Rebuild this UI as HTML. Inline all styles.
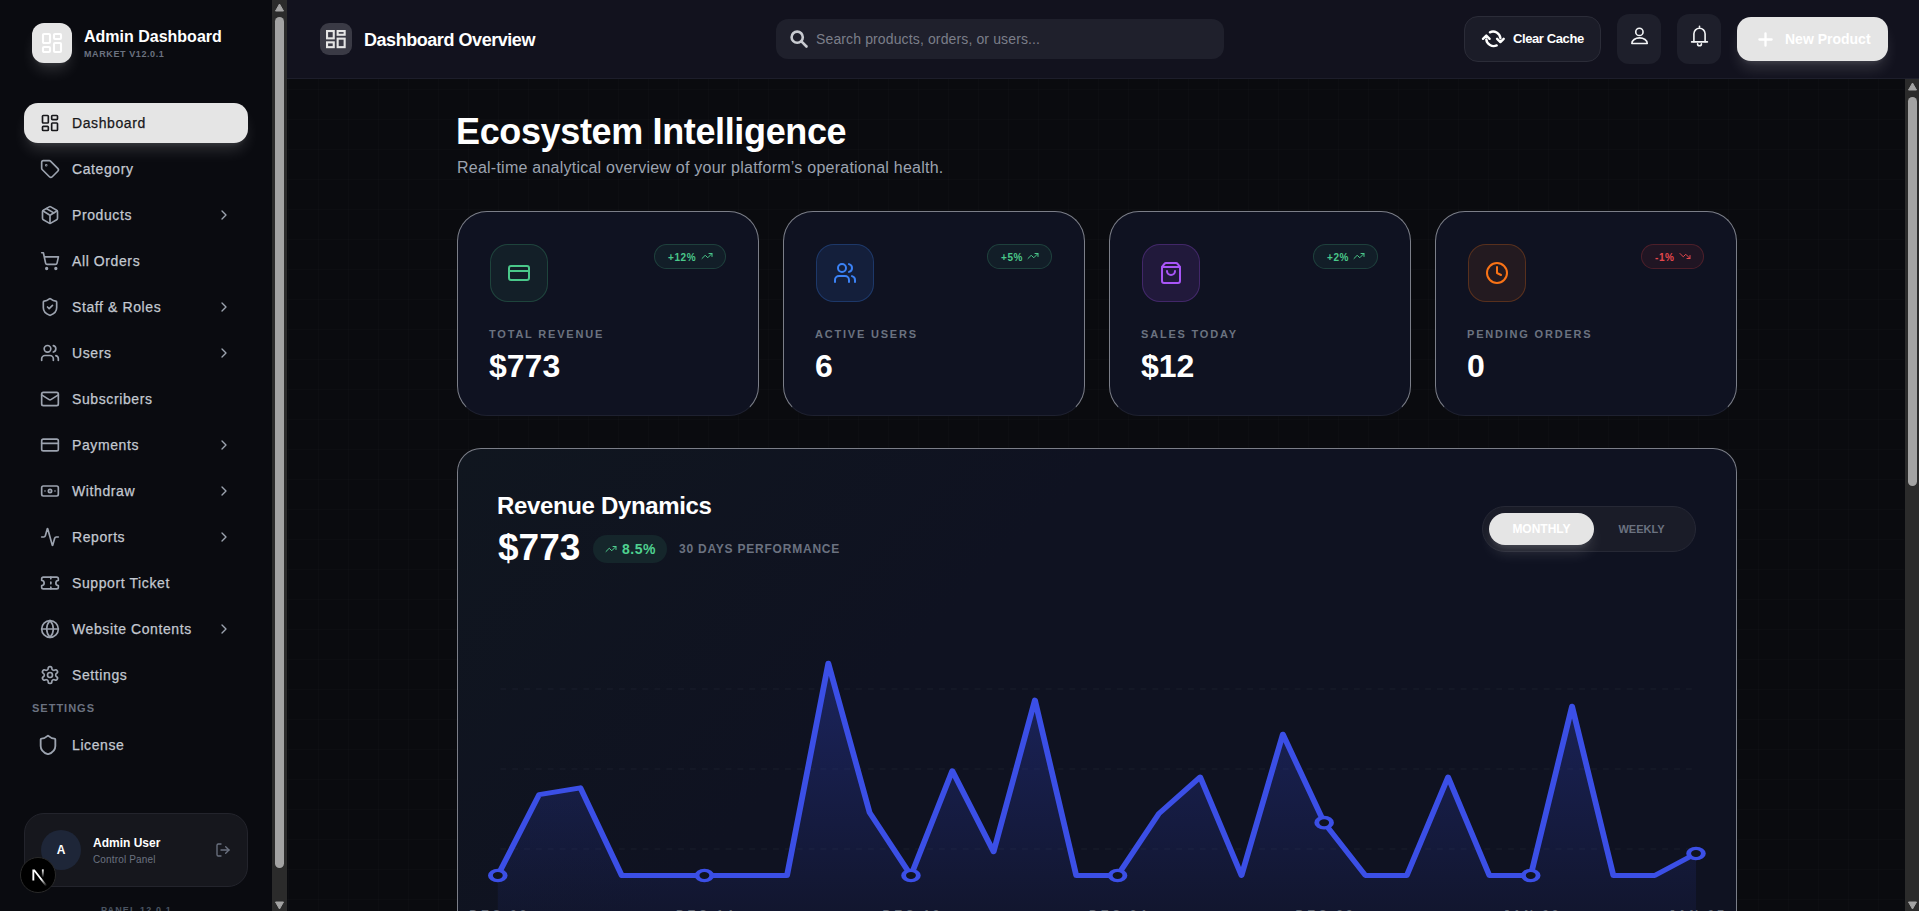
<!DOCTYPE html>
<html><head><meta charset="utf-8">
<style>
*{box-sizing:border-box;margin:0;padding:0}
html,body{width:1919px;height:911px;overflow:hidden;background:#0a0b0f;font-family:"Liberation Sans",sans-serif;}
.abs{position:absolute}
svg{display:block}
.t{position:absolute;white-space:nowrap}
</style></head><body>

<div class="abs" style="left:287px;top:79px;width:1617px;height:832px;background-color:#0a0b0f;background-image:linear-gradient(to right, rgba(255,255,255,0.013) 1px, transparent 1px),linear-gradient(to bottom, rgba(255,255,255,0.013) 1px, transparent 1px);background-size:30px 30px;background-position:31px 10px"></div>
<div class="abs" style="left:0;top:0;width:272px;height:911px;background:#0a0b10"></div>
<div class="abs" style="left:32px;top:23px;width:40px;height:40px;border-radius:12px;background:#e5e5e5;box-shadow:0 10px 15px -3px rgba(255,255,255,0.14),0 4px 6px -4px rgba(255,255,255,0.14)"><svg class="abs" style="left:8px;top:8px" width="24" height="24" viewBox="0 0 24 24" fill="none" stroke="#ffffff" stroke-width="2.1" stroke-linecap="round" stroke-linejoin="round"><rect width="7" height="9" x="3" y="3" rx="1"/><rect width="7" height="5" x="14" y="3" rx="1"/><rect width="7" height="9" x="14" y="12" rx="1"/><rect width="7" height="5" x="3" y="16" rx="1"/></svg></div>
<div class="t" style="left:84px;top:27px;color:#fff;font-weight:700;font-size:16px;line-height:20px">Admin Dashboard</div>
<div class="t" style="left:84px;top:48.5px;color:#6b7280;font-weight:700;font-size:9px;line-height:11px;letter-spacing:0.6px">MARKET V12.0.1</div>
<div class="abs" style="left:24px;top:103px;width:224px;height:40px;border-radius:14px;background:#e5e5e5;box-shadow:0 10px 15px -3px rgba(255,255,255,0.14),0 4px 6px -4px rgba(255,255,255,0.14)"></div>
<svg class="abs" style="left:40px;top:113px" width="20" height="20" viewBox="0 0 24 24" fill="none" stroke="#18181b" stroke-width="2" stroke-linecap="round" stroke-linejoin="round"><rect width="7" height="9" x="3" y="3" rx="1"/><rect width="7" height="5" x="14" y="3" rx="1"/><rect width="7" height="9" x="14" y="12" rx="1"/><rect width="7" height="5" x="3" y="16" rx="1"/></svg>
<div class="t" style="left:72px;top:103px;line-height:40px;font-size:14px;letter-spacing:0.6px;color:#18181b;-webkit-text-stroke:0.25px #18181b">Dashboard</div>
<svg class="abs" style="left:40px;top:159px" width="20" height="20" viewBox="0 0 24 24" fill="none" stroke="#9ca3af" stroke-width="2" stroke-linecap="round" stroke-linejoin="round"><path d="M12.586 2.586A2 2 0 0 0 11.172 2H4a2 2 0 0 0-2 2v7.172a2 2 0 0 0 .586 1.414l8.704 8.704a2.426 2.426 0 0 0 3.42 0l6.58-6.58a2.426 2.426 0 0 0 0-3.42z"/><circle cx="7.5" cy="7.5" r=".5" fill="currentColor"/></svg>
<div class="t" style="left:72px;top:149px;line-height:40px;font-size:14px;letter-spacing:0.6px;color:#c3c8d0;-webkit-text-stroke:0.25px #c3c8d0">Category</div>
<svg class="abs" style="left:40px;top:205px" width="20" height="20" viewBox="0 0 24 24" fill="none" stroke="#9ca3af" stroke-width="2" stroke-linecap="round" stroke-linejoin="round"><path d="M11 21.73a2 2 0 0 0 2 0l7-4A2 2 0 0 0 21 16V8a2 2 0 0 0-1-1.73l-7-4a2 2 0 0 0-2 0l-7 4A2 2 0 0 0 3 8v8a2 2 0 0 0 1 1.73z"/><path d="M12 22V12"/><path d="m3.3 7 7.703 4.734a2 2 0 0 0 1.994 0L20.7 7"/><path d="m7.5 4.27 9 5.15"/></svg>
<div class="t" style="left:72px;top:195px;line-height:40px;font-size:14px;letter-spacing:0.6px;color:#c3c8d0;-webkit-text-stroke:0.25px #c3c8d0">Products</div>
<svg class="abs" style="left:216px;top:207px" width="16" height="16" viewBox="0 0 24 24" fill="none" stroke="#9ca3af" stroke-width="2" stroke-linecap="round" stroke-linejoin="round"><path d="m9 18 6-6-6-6"/></svg>
<svg class="abs" style="left:40px;top:251px" width="20" height="20" viewBox="0 0 24 24" fill="none" stroke="#9ca3af" stroke-width="2" stroke-linecap="round" stroke-linejoin="round"><circle cx="8" cy="21" r="1"/><circle cx="19" cy="21" r="1"/><path d="M2.05 2.05h2l2.66 12.42a2 2 0 0 0 2 1.58h9.78a2 2 0 0 0 1.95-1.57l1.65-7.43H5.12"/></svg>
<div class="t" style="left:72px;top:241px;line-height:40px;font-size:14px;letter-spacing:0.6px;color:#c3c8d0;-webkit-text-stroke:0.25px #c3c8d0">All Orders</div>
<svg class="abs" style="left:40px;top:297px" width="20" height="20" viewBox="0 0 24 24" fill="none" stroke="#9ca3af" stroke-width="2" stroke-linecap="round" stroke-linejoin="round"><path d="M20 13c0 5-3.5 7.5-7.66 8.95a1 1 0 0 1-.67-.01C7.5 20.5 4 18 4 13V6a1 1 0 0 1 1-1c2 0 4.5-1.2 6.24-2.72a1.17 1.17 0 0 1 1.52 0C14.51 3.81 17 5 19 5a1 1 0 0 1 1 1z"/><path d="m9 12 2 2 4-4"/></svg>
<div class="t" style="left:72px;top:287px;line-height:40px;font-size:14px;letter-spacing:0.6px;color:#c3c8d0;-webkit-text-stroke:0.25px #c3c8d0">Staff &amp; Roles</div>
<svg class="abs" style="left:216px;top:299px" width="16" height="16" viewBox="0 0 24 24" fill="none" stroke="#9ca3af" stroke-width="2" stroke-linecap="round" stroke-linejoin="round"><path d="m9 18 6-6-6-6"/></svg>
<svg class="abs" style="left:40px;top:343px" width="20" height="20" viewBox="0 0 24 24" fill="none" stroke="#9ca3af" stroke-width="2" stroke-linecap="round" stroke-linejoin="round"><path d="M16 21v-2a4 4 0 0 0-4-4H6a4 4 0 0 0-4 4v2"/><circle cx="9" cy="7" r="4"/><path d="M22 21v-2a4 4 0 0 0-3-3.87"/><path d="M16 3.13a4 4 0 0 1 0 7.75"/></svg>
<div class="t" style="left:72px;top:333px;line-height:40px;font-size:14px;letter-spacing:0.6px;color:#c3c8d0;-webkit-text-stroke:0.25px #c3c8d0">Users</div>
<svg class="abs" style="left:216px;top:345px" width="16" height="16" viewBox="0 0 24 24" fill="none" stroke="#9ca3af" stroke-width="2" stroke-linecap="round" stroke-linejoin="round"><path d="m9 18 6-6-6-6"/></svg>
<svg class="abs" style="left:40px;top:389px" width="20" height="20" viewBox="0 0 24 24" fill="none" stroke="#9ca3af" stroke-width="2" stroke-linecap="round" stroke-linejoin="round"><rect width="20" height="16" x="2" y="4" rx="2"/><path d="m22 7-8.97 5.7a1.94 1.94 0 0 1-2.06 0L2 7"/></svg>
<div class="t" style="left:72px;top:379px;line-height:40px;font-size:14px;letter-spacing:0.6px;color:#c3c8d0;-webkit-text-stroke:0.25px #c3c8d0">Subscribers</div>
<svg class="abs" style="left:40px;top:435px" width="20" height="20" viewBox="0 0 24 24" fill="none" stroke="#9ca3af" stroke-width="2" stroke-linecap="round" stroke-linejoin="round"><rect width="20" height="14" x="2" y="5" rx="2"/><line x1="2" x2="22" y1="10" y2="10"/></svg>
<div class="t" style="left:72px;top:425px;line-height:40px;font-size:14px;letter-spacing:0.6px;color:#c3c8d0;-webkit-text-stroke:0.25px #c3c8d0">Payments</div>
<svg class="abs" style="left:216px;top:437px" width="16" height="16" viewBox="0 0 24 24" fill="none" stroke="#9ca3af" stroke-width="2" stroke-linecap="round" stroke-linejoin="round"><path d="m9 18 6-6-6-6"/></svg>
<svg class="abs" style="left:40px;top:481px" width="20" height="20" viewBox="0 0 24 24" fill="none" stroke="#9ca3af" stroke-width="2" stroke-linecap="round" stroke-linejoin="round"><rect width="20" height="12" x="2" y="6" rx="2"/><circle cx="12" cy="12" r="2"/><path d="M6 12h.01M18 12h.01"/></svg>
<div class="t" style="left:72px;top:471px;line-height:40px;font-size:14px;letter-spacing:0.6px;color:#c3c8d0;-webkit-text-stroke:0.25px #c3c8d0">Withdraw</div>
<svg class="abs" style="left:216px;top:483px" width="16" height="16" viewBox="0 0 24 24" fill="none" stroke="#9ca3af" stroke-width="2" stroke-linecap="round" stroke-linejoin="round"><path d="m9 18 6-6-6-6"/></svg>
<svg class="abs" style="left:40px;top:527px" width="20" height="20" viewBox="0 0 24 24" fill="none" stroke="#9ca3af" stroke-width="2" stroke-linecap="round" stroke-linejoin="round"><path d="M22 12h-2.48a2 2 0 0 0-1.93 1.46l-2.35 8.36a.25.25 0 0 1-.48 0L9.24 2.18a.25.25 0 0 0-.48 0l-2.35 8.36A2 2 0 0 1 4.49 12H2"/></svg>
<div class="t" style="left:72px;top:517px;line-height:40px;font-size:14px;letter-spacing:0.6px;color:#c3c8d0;-webkit-text-stroke:0.25px #c3c8d0">Reports</div>
<svg class="abs" style="left:216px;top:529px" width="16" height="16" viewBox="0 0 24 24" fill="none" stroke="#9ca3af" stroke-width="2" stroke-linecap="round" stroke-linejoin="round"><path d="m9 18 6-6-6-6"/></svg>
<svg class="abs" style="left:40px;top:573px" width="20" height="20" viewBox="0 0 24 24" fill="none" stroke="#9ca3af" stroke-width="2" stroke-linecap="round" stroke-linejoin="round"><path d="M2 9a3 3 0 0 1 0 6v2a2 2 0 0 0 2 2h16a2 2 0 0 0 2-2v-2a3 3 0 0 1 0-6V7a2 2 0 0 0-2-2H4a2 2 0 0 0-2 2Z"/><path d="M13 5v2"/><path d="M13 17v2"/><path d="M13 11v2"/></svg>
<div class="t" style="left:72px;top:563px;line-height:40px;font-size:14px;letter-spacing:0.6px;color:#c3c8d0;-webkit-text-stroke:0.25px #c3c8d0">Support Ticket</div>
<svg class="abs" style="left:40px;top:619px" width="20" height="20" viewBox="0 0 24 24" fill="none" stroke="#9ca3af" stroke-width="2" stroke-linecap="round" stroke-linejoin="round"><circle cx="12" cy="12" r="10"/><path d="M12 2a14.5 14.5 0 0 0 0 20 14.5 14.5 0 0 0 0-20"/><path d="M2 12h20"/></svg>
<div class="t" style="left:72px;top:609px;line-height:40px;font-size:14px;letter-spacing:0.6px;color:#c3c8d0;-webkit-text-stroke:0.25px #c3c8d0">Website Contents</div>
<svg class="abs" style="left:216px;top:621px" width="16" height="16" viewBox="0 0 24 24" fill="none" stroke="#9ca3af" stroke-width="2" stroke-linecap="round" stroke-linejoin="round"><path d="m9 18 6-6-6-6"/></svg>
<svg class="abs" style="left:40px;top:665px" width="20" height="20" viewBox="0 0 24 24" fill="none" stroke="#9ca3af" stroke-width="2" stroke-linecap="round" stroke-linejoin="round"><path d="M12.22 2h-.44a2 2 0 0 0-2 2v.18a2 2 0 0 1-1 1.73l-.43.25a2 2 0 0 1-2 0l-.15-.08a2 2 0 0 0-2.73.73l-.22.38a2 2 0 0 0 .73 2.73l.15.1a2 2 0 0 1 1 1.72v.51a2 2 0 0 1-1 1.74l-.15.09a2 2 0 0 0-.73 2.73l.22.38a2 2 0 0 0 2.73.73l.15-.08a2 2 0 0 1 2 0l.43.25a2 2 0 0 1 1 1.73V20a2 2 0 0 0 2 2h.44a2 2 0 0 0 2-2v-.18a2 2 0 0 1 1-1.73l.43-.25a2 2 0 0 1 2 0l.15.08a2 2 0 0 0 2.73-.73l.22-.39a2 2 0 0 0-.73-2.73l-.15-.08a2 2 0 0 1-1-1.74v-.5a2 2 0 0 1 1-1.74l.15-.09a2 2 0 0 0 .73-2.73l-.22-.38a2 2 0 0 0-2.73-.73l-.15.08a2 2 0 0 1-2 0l-.43-.25a2 2 0 0 1-1-1.73V4a2 2 0 0 0-2-2z"/><circle cx="12" cy="12" r="3"/></svg>
<div class="t" style="left:72px;top:655px;line-height:40px;font-size:14px;letter-spacing:0.6px;color:#c3c8d0;-webkit-text-stroke:0.25px #c3c8d0">Settings</div>
<div class="t" style="left:32px;top:702px;line-height:13px;font-size:11px;font-weight:700;letter-spacing:1px;color:#6b7280">SETTINGS</div>
<svg class="abs" style="left:37px;top:734px" width="22" height="22" viewBox="0 0 24 24" fill="none" stroke="#9ca3af" stroke-width="2" stroke-linecap="round" stroke-linejoin="round"><path d="M20 13c0 5-3.5 7.5-7.66 8.95a1 1 0 0 1-.67-.01C7.5 20.5 4 18 4 13V6a1 1 0 0 1 1-1c2 0 4.5-1.2 6.24-2.72a1.17 1.17 0 0 1 1.52 0C14.51 3.81 17 5 19 5a1 1 0 0 1 1 1z"/></svg>
<div class="t" style="left:72px;top:725px;line-height:40px;font-size:14px;letter-spacing:0.6px;color:#c3c8d0;-webkit-text-stroke:0.25px #c3c8d0">License</div>
<div class="abs" style="left:24px;top:813px;width:224px;height:74px;border-radius:20px;background:#16171d;border:1px solid #23242c"></div>
<div class="abs" style="left:41px;top:830px;width:40px;height:40px;border-radius:50%;background:#1e2638"></div>
<div class="t" style="left:41px;top:830px;width:40px;text-align:center;line-height:40px;font-size:12px;font-weight:700;color:#fff">A</div>
<div class="t" style="left:93px;top:836px;line-height:15px;font-size:12px;font-weight:700;color:#fff">Admin User</div>
<div class="t" style="left:93px;top:852.5px;line-height:13px;font-size:10px;letter-spacing:0.15px;color:#6b7280">Control Panel</div>
<svg class="abs" style="left:215px;top:842px" width="16" height="16" viewBox="0 0 24 24" fill="none" stroke="#6b7280" stroke-width="2" stroke-linecap="round" stroke-linejoin="round"><path d="M9 21H5a2 2 0 0 1-2-2V5a2 2 0 0 1 2-2h4"/><polyline points="16 17 21 12 16 7"/><line x1="21" x2="9" y1="12" y2="12"/></svg>
<div class="t" style="left:101px;top:904.2px;line-height:12px;font-size:9px;font-weight:700;letter-spacing:1.15px;color:#4b5563">PANEL 12.0.1</div>
<div class="abs" style="left:20px;top:857px;width:36px;height:36px;border-radius:50%;background:#000;border:1px solid #2a2a2a"></div>
<svg class="abs" style="left:23.8px;top:861.2px" width="28" height="28" viewBox="0 0 180 180"><defs><linearGradient id="ng0" x1="109" y1="116.5" x2="144.5" y2="160.5" gradientUnits="userSpaceOnUse"><stop stop-color="#fff"/><stop offset="1" stop-color="#fff" stop-opacity="0"/></linearGradient><linearGradient id="ng1" x1="121" y1="54" x2="120.799" y2="106.875" gradientUnits="userSpaceOnUse"><stop stop-color="#fff"/><stop offset="1" stop-color="#fff" stop-opacity="0"/></linearGradient></defs><path d="M149.508 157.52L69.142 54H54V125.97H66.1136V69.3836L139.999 164.845C143.333 162.614 146.509 160.165 149.508 157.52Z" fill="url(#ng0)"/><rect x="115" y="54" width="12" height="72" fill="url(#ng1)"/></svg>
<div class="abs" style="left:272px;top:0;width:15px;height:911px;background:#2b2b2b"></div>
<div class="abs" style="left:275px;top:17px;width:9px;height:851px;border-radius:5px;background:#a3a3a3"></div>
<svg class="abs" style="left:272px;top:0" width="15" height="15"><path d="M3.5 11 L7.5 4 L11.5 11 Z" fill="#a3a3a3" stroke="#a3a3a3" stroke-linejoin="round" stroke-width="1"/></svg>
<svg class="abs" style="left:272px;top:896px" width="15" height="15"><path d="M3.5 6 L7.5 13 L11.5 6 Z" fill="#a3a3a3" stroke="#a3a3a3" stroke-linejoin="round" stroke-width="1"/></svg>
<div class="abs" style="left:287px;top:0;width:1632px;height:79px;background:#12121e;border-bottom:1px solid #1d1e2b"></div>
<div class="abs" style="left:320px;top:23px;width:32px;height:32px;border-radius:9px;background:#3a3a45"></div>
<svg class="abs" style="left:326px;top:30px" width="20" height="20" viewBox="0 0 20 20" fill="none" stroke="#e5e5e5" stroke-width="2.1"><rect x="1.05" y="1.05" width="6.7" height="7.3"/><rect x="11.65" y="1.05" width="7" height="3.7"/><rect x="11.65" y="8.65" width="7" height="8.5"/><rect x="1.05" y="12.35" width="6.7" height="4.8"/></svg>
<div class="t" style="left:364px;top:29px;line-height:22px;font-size:18px;font-weight:700;letter-spacing:-0.45px;color:#fff">Dashboard Overview</div>
<div class="abs" style="left:776px;top:19px;width:448px;height:40px;border-radius:12px;background:#1f202c"></div>
<svg class="abs" style="left:789px;top:29px" width="20" height="20" viewBox="0 0 20 20" fill="none" stroke="#c9cbd1" stroke-width="2.6" stroke-linecap="round"><circle cx="8.2" cy="8.2" r="5.6"/><path d="M12.4 12.4 L17.5 17.5"/></svg>
<div class="t" style="left:816px;top:19px;line-height:40px;font-size:14px;letter-spacing:0.13px;color:#7b7e89">Search products, orders, or users...</div>
<div class="abs" style="left:1464px;top:16px;width:137px;height:46px;border-radius:14px;background:#1b1c28;border:1px solid #2b2c38"></div>
<svg class="abs" style="left:1478px;top:25px" width="32" height="28" viewBox="0 0 32 28" fill="none" stroke="#fff" stroke-width="2.4" stroke-linecap="round" stroke-linejoin="round"><path d="M11.9 7.3 A7.4 7.4 0 0 1 22.4 13.2"/><path d="M19.1 13.8 L22.4 17.1 L25.7 13.8"/><path d="M18.7 20.4 A7.4 7.4 0 0 1 8.3 14.4"/><path d="M5 13.8 L8.3 10.5 L11.6 13.8"/></svg>
<div class="t" style="left:1513px;top:16px;line-height:46px;font-size:13px;font-weight:700;letter-spacing:-0.4px;color:#fff">Clear Cache</div>
<div class="abs" style="left:1617px;top:14px;width:44px;height:50px;border-radius:12px;background:#1e1f2b"></div>
<svg class="abs" style="left:1617px;top:14px" width="44" height="50" fill="none" stroke="#f3f4f6" stroke-width="1.6" stroke-linejoin="round"><circle cx="22.4" cy="17.9" r="3.65"/><path d="M14.85 29.45 A7.7 5.6 0 0 1 30.25 29.45 Z"/></svg>
<div class="abs" style="left:1677px;top:14px;width:44px;height:50px;border-radius:12px;background:#1e1f2b"></div>
<svg class="abs" style="left:1677px;top:14px" width="44" height="50" fill="none" stroke="#f3f4f6" stroke-width="1.6" stroke-linecap="round" stroke-linejoin="round"><path d="M16.9 27.8 V19.8 A5.6 5.6 0 0 1 28.1 19.8 V27.8"/><path d="M14.6 27.9 H30.4"/><path d="M22.5 13.2 V12.4"/><path d="M20.6 29.9 A1.9 1.9 0 0 0 24.4 29.9"/></svg>
<div class="abs" style="left:1737px;top:17px;width:151px;height:44px;border-radius:14px;background:#e5e5e5;box-shadow:0 10px 15px -3px rgba(255,255,255,0.14),0 4px 6px -4px rgba(255,255,255,0.14)"></div>
<svg class="abs" style="left:1754.8px;top:28.7px" width="21" height="21" viewBox="0 0 24 24" fill="none" stroke="#ffffff" stroke-width="2.6" stroke-linecap="round" stroke-linejoin="round"><path d="M5 12h14"/><path d="M12 5v14"/></svg>
<div class="t" style="left:1785px;top:17px;line-height:44px;font-size:14px;font-weight:700;color:#fff">New Product</div>
<div class="t" style="left:456px;top:111px;line-height:42px;font-size:36px;font-weight:700;letter-spacing:-0.36px;color:#fff">Ecosystem Intelligence</div>
<div class="t" style="left:457px;top:157px;line-height:22px;font-size:16px;letter-spacing:0.24px;color:#9ca3af">Real-time analytical overview of your platform&#8217;s operational health.</div>
<div class="abs" style="left:457px;top:211px;width:302px;height:205px;border-radius:30px;background:#0f1221;border:1px solid #7b7e88;border-bottom-color:#1e2130"></div>
<div class="abs" style="left:490px;top:244px;width:58px;height:58px;border-radius:18px;background:rgba(74,200,138,0.075);border:1px solid rgba(74,200,138,0.22)"></div>
<svg class="abs" style="left:507px;top:261px" width="24" height="24" viewBox="0 0 24 24" fill="none" stroke="#4ac88a" stroke-width="2" stroke-linecap="round" stroke-linejoin="round"><rect width="20" height="14" x="2" y="5" rx="2"/><line x1="2" x2="22" y1="10" y2="10"/></svg>
<div class="abs" style="left:654px;top:244px;width:72px;height:25px;border-radius:13px;background:rgba(74,200,138,0.07);border:1px solid rgba(74,200,138,0.20)"></div>
<div class="t" style="left:668px;top:244.5px;line-height:25px;font-size:10px;font-weight:700;letter-spacing:0.6px;color:#4ac88a">+12%</div>
<svg class="abs" style="left:701px;top:250px" width="12" height="12" viewBox="0 0 24 24" fill="none" stroke="#4ac88a" stroke-width="2" stroke-linecap="round" stroke-linejoin="round"><polyline points="22 7 13.5 15.5 8.5 10.5 2 17"/><polyline points="16 7 22 7 22 13"/></svg>
<div class="t" style="left:489px;top:327px;line-height:14px;font-size:11px;font-weight:700;letter-spacing:1.8px;color:#6b7280">TOTAL REVENUE</div>
<div class="t" style="left:489px;top:348px;line-height:36px;font-size:32px;font-weight:700;color:#fff">$773</div>
<div class="abs" style="left:783px;top:211px;width:302px;height:205px;border-radius:30px;background:#0f1221;border:1px solid #7b7e88;border-bottom-color:#1e2130"></div>
<div class="abs" style="left:816px;top:244px;width:58px;height:58px;border-radius:18px;background:rgba(59,130,246,0.12);border:1px solid rgba(59,130,246,0.25)"></div>
<svg class="abs" style="left:833px;top:261px" width="24" height="24" viewBox="0 0 24 24" fill="none" stroke="#3b82f6" stroke-width="2" stroke-linecap="round" stroke-linejoin="round"><path d="M16 21v-2a4 4 0 0 0-4-4H6a4 4 0 0 0-4 4v2"/><circle cx="9" cy="7" r="4"/><path d="M22 21v-2a4 4 0 0 0-3-3.87"/><path d="M16 3.13a4 4 0 0 1 0 7.75"/></svg>
<div class="abs" style="left:987px;top:244px;width:65px;height:25px;border-radius:13px;background:rgba(74,200,138,0.07);border:1px solid rgba(74,200,138,0.20)"></div>
<div class="t" style="left:1001px;top:244.5px;line-height:25px;font-size:10px;font-weight:700;letter-spacing:0.6px;color:#4ac88a">+5%</div>
<svg class="abs" style="left:1027px;top:250px" width="12" height="12" viewBox="0 0 24 24" fill="none" stroke="#4ac88a" stroke-width="2" stroke-linecap="round" stroke-linejoin="round"><polyline points="22 7 13.5 15.5 8.5 10.5 2 17"/><polyline points="16 7 22 7 22 13"/></svg>
<div class="t" style="left:815px;top:327px;line-height:14px;font-size:11px;font-weight:700;letter-spacing:1.8px;color:#6b7280">ACTIVE USERS</div>
<div class="t" style="left:815px;top:348px;line-height:36px;font-size:32px;font-weight:700;color:#fff">6</div>
<div class="abs" style="left:1109px;top:211px;width:302px;height:205px;border-radius:30px;background:#0f1221;border:1px solid #7b7e88;border-bottom-color:#1e2130"></div>
<div class="abs" style="left:1142px;top:244px;width:58px;height:58px;border-radius:18px;background:rgba(168,85,247,0.12);border:1px solid rgba(168,85,247,0.25)"></div>
<svg class="abs" style="left:1159px;top:261px" width="24" height="24" viewBox="0 0 24 24" fill="none" stroke="#a855f7" stroke-width="2" stroke-linecap="round" stroke-linejoin="round"><path d="M16 10a4 4 0 0 1-8 0"/><path d="M3.103 6.034h17.794"/><path d="M3.4 5.467a2 2 0 0 0-.4 1.2V20a2 2 0 0 0 2 2h14a2 2 0 0 0 2-2V6.667a2 2 0 0 0-.4-1.2l-2-2.667A2 2 0 0 0 17 2H7a2 2 0 0 0-1.6.8z"/></svg>
<div class="abs" style="left:1313px;top:244px;width:65px;height:25px;border-radius:13px;background:rgba(74,200,138,0.07);border:1px solid rgba(74,200,138,0.20)"></div>
<div class="t" style="left:1327px;top:244.5px;line-height:25px;font-size:10px;font-weight:700;letter-spacing:0.6px;color:#4ac88a">+2%</div>
<svg class="abs" style="left:1353px;top:250px" width="12" height="12" viewBox="0 0 24 24" fill="none" stroke="#4ac88a" stroke-width="2" stroke-linecap="round" stroke-linejoin="round"><polyline points="22 7 13.5 15.5 8.5 10.5 2 17"/><polyline points="16 7 22 7 22 13"/></svg>
<div class="t" style="left:1141px;top:327px;line-height:14px;font-size:11px;font-weight:700;letter-spacing:1.8px;color:#6b7280">SALES TODAY</div>
<div class="t" style="left:1141px;top:348px;line-height:36px;font-size:32px;font-weight:700;color:#fff">$12</div>
<div class="abs" style="left:1435px;top:211px;width:302px;height:205px;border-radius:30px;background:#0f1221;border:1px solid #7b7e88;border-bottom-color:#1e2130"></div>
<div class="abs" style="left:1468px;top:244px;width:58px;height:58px;border-radius:18px;background:rgba(249,115,22,0.09);border:1px solid rgba(249,115,22,0.25)"></div>
<svg class="abs" style="left:1485px;top:261px" width="24" height="24" viewBox="0 0 24 24" fill="none" stroke="#f97316" stroke-width="2" stroke-linecap="round" stroke-linejoin="round"><circle cx="12" cy="12" r="10"/><polyline points="12 6 12 12 16 14"/></svg>
<div class="abs" style="left:1641px;top:244px;width:63px;height:25px;border-radius:13px;background:rgba(239,68,68,0.08);border:1px solid rgba(239,68,68,0.22)"></div>
<div class="t" style="left:1655px;top:244.5px;line-height:25px;font-size:10px;font-weight:700;letter-spacing:0.6px;color:#e5484d">-1%</div>
<svg class="abs" style="left:1679px;top:250px" width="12" height="12" viewBox="0 0 24 24" fill="none" stroke="#e5484d" stroke-width="2" stroke-linecap="round" stroke-linejoin="round"><polyline points="22 17 13.5 8.5 8.5 13.5 2 7"/><polyline points="16 17 22 17 22 11"/></svg>
<div class="t" style="left:1467px;top:327px;line-height:14px;font-size:11px;font-weight:700;letter-spacing:1.8px;color:#6b7280">PENDING ORDERS</div>
<div class="t" style="left:1467px;top:348px;line-height:36px;font-size:32px;font-weight:700;color:#fff">0</div>
<div class="abs" style="left:457px;top:448px;width:1280px;height:600px;border-radius:24px;background:linear-gradient(135deg,#10161f 0%,#0f1221 35%,#0f1221 100%);border:1px solid #7b7e88;border-bottom-color:#1e2130"></div>
<div class="t" style="left:497px;top:491px;line-height:30px;font-size:24px;font-weight:700;letter-spacing:-0.35px;color:#fff">Revenue Dynamics</div>
<div class="t" style="left:498px;top:527px;line-height:42px;font-size:37px;font-weight:700;color:#fff">$773</div>
<div class="abs" style="left:593px;top:535px;width:74px;height:28px;border-radius:14px;background:#15262b"></div>
<svg class="abs" style="left:605px;top:543px" width="12" height="12" viewBox="0 0 24 24" fill="none" stroke="#4fd190" stroke-width="2" stroke-linecap="round" stroke-linejoin="round"><polyline points="22 7 13.5 15.5 8.5 10.5 2 17"/><polyline points="16 7 22 7 22 13"/></svg>
<div class="t" style="left:622px;top:535px;line-height:28px;font-size:14px;font-weight:700;letter-spacing:0.5px;color:#4fd190">8.5%</div>
<div class="t" style="left:679px;top:541px;line-height:16px;font-size:12px;font-weight:700;letter-spacing:0.78px;color:#6b7280">30 DAYS PERFORMANCE</div>
<div class="abs" style="left:1482px;top:506px;width:214px;height:46px;border-radius:23px;background:#1a1c28;border:1px solid #262835"></div>
<div class="abs" style="left:1489px;top:513px;width:105px;height:32px;border-radius:16px;background:#e5e5e5;box-shadow:0 10px 15px -3px rgba(255,255,255,0.14),0 4px 6px -4px rgba(255,255,255,0.14)"></div>
<div class="t" style="left:1489px;top:513px;width:105px;text-align:center;line-height:32px;font-size:12px;font-weight:700;color:#fff">MONTHLY</div>
<div class="t" style="left:1594px;top:513px;width:95px;text-align:center;line-height:32px;font-size:11px;font-weight:700;color:#6b7280">WEEKLY</div>
<svg class="abs" style="left:457px;top:600px" width="1280" height="311" viewBox="0 0 1066.67 311" preserveAspectRatio="none"><defs><linearGradient id="fg" x1="0" y1="0" x2="0" y2="1"><stop offset="0" stop-color="#2a3aa8" stop-opacity="0.45"/><stop offset="1" stop-color="#2a3aa8" stop-opacity="0.10"/></linearGradient></defs><line x1="36.08" x2="1032.50" y1="89" y2="89" stroke="#1b1e2c" stroke-width="1" stroke-dasharray="4.94 4.94"/><line x1="36.08" x2="1032.50" y1="169" y2="169" stroke="#1b1e2c" stroke-width="1" stroke-dasharray="4.94 4.94"/><line x1="36.08" x2="1032.50" y1="249" y2="249" stroke="#1b1e2c" stroke-width="1" stroke-dasharray="4.94 4.94"/><path d="M34.00 275.50 L68.43 194.60 L102.86 187.80 L137.29 275.50 L171.72 275.50 L206.16 275.50 L240.59 275.50 L275.02 275.50 L309.45 63.20 L343.88 212.70 L378.31 275.50 L412.74 170.70 L447.17 251.80 L481.60 100.00 L516.03 275.50 L550.47 275.50 L584.90 213.60 L619.33 177.00 L653.76 275.50 L688.19 134.20 L722.62 222.70 L757.05 275.50 L791.48 275.50 L825.91 177.00 L860.34 275.50 L894.78 275.50 L929.21 106.20 L963.64 275.50 L998.07 275.50 L1032.50 253.50 L1032.50 311 L34.00 311 Z" fill="url(#fg)"/><path d="M34.00 275.50 L68.43 194.60 L102.86 187.80 L137.29 275.50 L171.72 275.50 L206.16 275.50 L240.59 275.50 L275.02 275.50 L309.45 63.20 L343.88 212.70 L378.31 275.50 L412.74 170.70 L447.17 251.80 L481.60 100.00 L516.03 275.50 L550.47 275.50 L584.90 213.60 L619.33 177.00 L653.76 275.50 L688.19 134.20 L722.62 222.70 L757.05 275.50 L791.48 275.50 L825.91 177.00 L860.34 275.50 L894.78 275.50 L929.21 106.20 L963.64 275.50 L998.07 275.50 L1032.50 253.50" fill="none" stroke="#3b4fe6" stroke-width="4.85" stroke-linejoin="round" stroke-linecap="round"/></svg>
<svg class="abs" style="left:457px;top:600px" width="1280" height="311" viewBox="0 0 895.10 311" preserveAspectRatio="none"><circle cx="28.53" cy="275.50" r="5.15" fill="#10131f" stroke="#3b4fe6" stroke-width="3.4"/><circle cx="173.00" cy="275.50" r="5.15" fill="#10131f" stroke="#3b4fe6" stroke-width="3.4"/><circle cx="317.46" cy="275.50" r="5.15" fill="#10131f" stroke="#3b4fe6" stroke-width="3.4"/><circle cx="461.93" cy="275.50" r="5.15" fill="#10131f" stroke="#3b4fe6" stroke-width="3.4"/><circle cx="606.39" cy="222.70" r="5.15" fill="#10131f" stroke="#3b4fe6" stroke-width="3.4"/><circle cx="750.86" cy="275.50" r="5.15" fill="#10131f" stroke="#3b4fe6" stroke-width="3.4"/><circle cx="866.43" cy="253.50" r="5.15" fill="#10131f" stroke="#3b4fe6" stroke-width="3.4"/></svg>
<div class="t" style="left:457.8px;top:908.2px;width:80px;text-align:center;line-height:14px;font-size:12px;font-weight:700;letter-spacing:3px;text-indent:3px;color:#5b6270">DEC 09</div>
<div class="t" style="left:664.4px;top:908.2px;width:80px;text-align:center;line-height:14px;font-size:12px;font-weight:700;letter-spacing:3px;text-indent:3px;color:#5b6270">DEC 14</div>
<div class="t" style="left:871.0px;top:908.2px;width:80px;text-align:center;line-height:14px;font-size:12px;font-weight:700;letter-spacing:3px;text-indent:3px;color:#5b6270">DEC 19</div>
<div class="t" style="left:1077.6px;top:908.2px;width:80px;text-align:center;line-height:14px;font-size:12px;font-weight:700;letter-spacing:3px;text-indent:3px;color:#5b6270">DEC 24</div>
<div class="t" style="left:1284.1px;top:908.2px;width:80px;text-align:center;line-height:14px;font-size:12px;font-weight:700;letter-spacing:3px;text-indent:3px;color:#5b6270">DEC 29</div>
<div class="t" style="left:1490.7px;top:908.2px;width:80px;text-align:center;line-height:14px;font-size:12px;font-weight:700;letter-spacing:3px;text-indent:3px;color:#5b6270">JAN 03</div>
<div class="t" style="left:1656.0px;top:908.2px;width:80px;text-align:center;line-height:14px;font-size:12px;font-weight:700;letter-spacing:3px;text-indent:3px;color:#5b6270">JAN 07</div>
<div class="abs" style="left:1905px;top:79px;width:15px;height:832px;background:#2b2b2b"></div>
<div class="abs" style="left:1908px;top:97px;width:9px;height:389px;border-radius:5px;background:#a3a3a3"></div>
<svg class="abs" style="left:1905px;top:79px" width="15" height="15"><path d="M3.5 11 L7.5 4 L11.5 11 Z" fill="#a3a3a3" stroke="#a3a3a3" stroke-linejoin="round" stroke-width="1"/></svg>
<svg class="abs" style="left:1905px;top:896px" width="15" height="15"><path d="M3.5 6 L7.5 13 L11.5 6 Z" fill="#a3a3a3" stroke="#a3a3a3" stroke-linejoin="round" stroke-width="1"/></svg>
</body></html>
